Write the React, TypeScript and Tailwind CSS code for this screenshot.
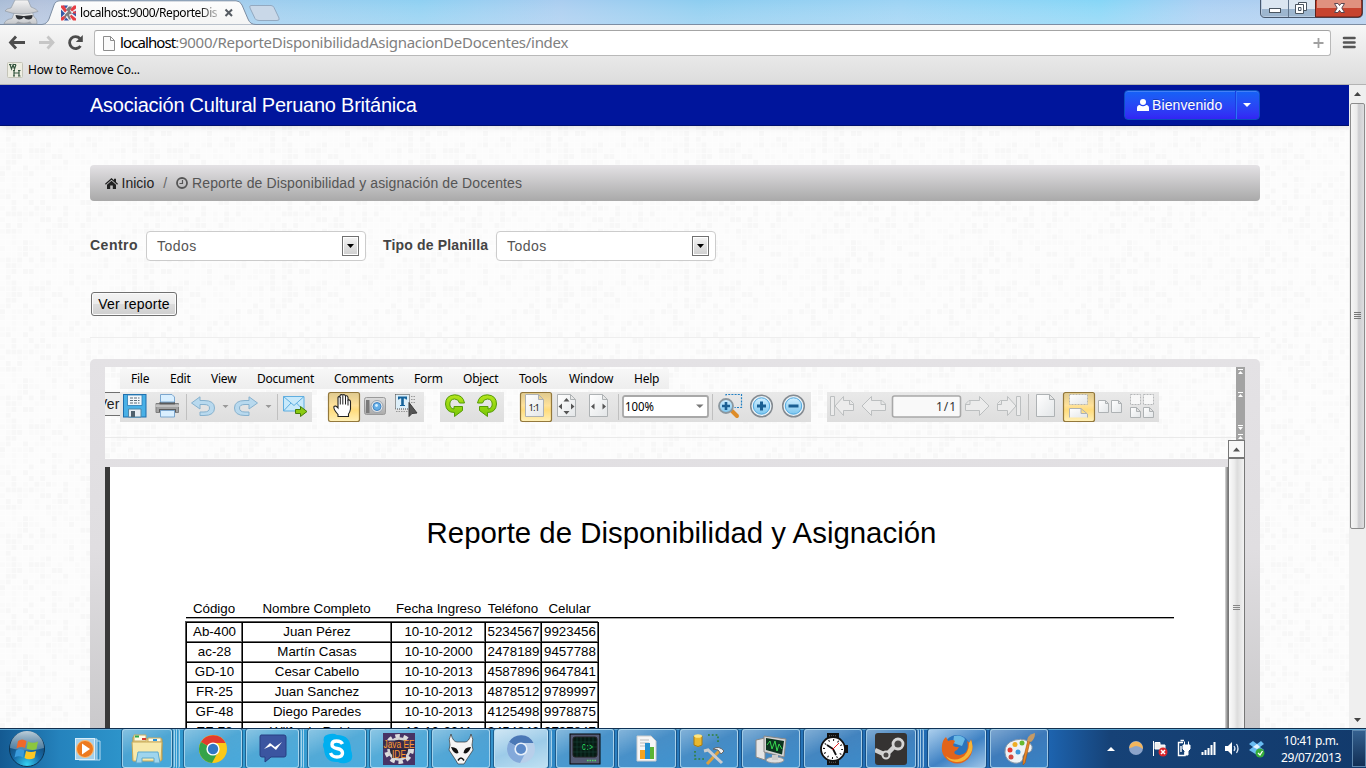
import React from "react";

const SEGOE = "font-['Noto_Sans','Open_Sans',sans-serif]";
const ARIAL = "font-['Liberation_Sans',Arial,sans-serif]";

/* ---------- background weave of the page ---------- */

function makeCells() {
  const cells: { x: number; y: number; o: number }[] = [];
  let seed = 41;
  for (let r = 0; r < 24; r++) {
    for (let c = 0; c < 24; c++) {
      seed = (seed * 1103515245 + 12345) % 2147483648;
      const v = seed / 2147483648;
      cells.push({ x: c * 5.75, y: r * 5.75, o: v > 0.82 ? 0.028 : v > 0.5 ? 0.017 : 0.008 });
    }
  }
  return cells;
}
const CELLS = makeCells();

function Weave({ id }: { id: string }) {
  return (
    <svg className="absolute inset-0 h-full w-full" aria-hidden="true">
      <defs>
        <pattern id={id} width="138" height="138" patternUnits="userSpaceOnUse">
          <rect width="138" height="138" fill="#fefefe" />
          {CELLS.map((c, i) => (
            <rect key={i} x={c.x} y={c.y} width="4.9" height="4.9" fill="#000" opacity={c.o} />
          ))}
        </pattern>
      </defs>
      <rect width="100%" height="100%" fill={`url(#${id})`} />
    </svg>
  );
}

/* ---------- browser chrome ---------- */

function TitleBar() {
  return (
    <div className="relative h-[25px] shrink-0 bg-[linear-gradient(90deg,#a9bcd6_0px,#b3c2dc_40px,#9fcdee_260px,#8fd0f2_420px,#a9cdf0_560px,#8dcdf0_700px,#9cd3f4_900px,#86d6f7_1100px,#a9cff3_1200px,#b4cdec_1366px)]">
      <svg className="absolute inset-0" width="1366" height="25">
        <defs>
          <linearGradient id="tabg" x1="0" y1="0" x2="0" y2="1">
            <stop offset="0" stopColor="#fdfdfd" />
            <stop offset="1" stopColor="#f4f4f4" />
          </linearGradient>
          <linearGradient id="hat" x1="0" y1="0" x2="0" y2="1">
            <stop offset="0" stopColor="#f4f4f4" />
            <stop offset="1" stopColor="#c4c6ca" />
          </linearGradient>
          <linearGradient id="glow" x1="0" y1="0" x2="0" y2="1">
            <stop offset="0" stopColor="#fff" stopOpacity="0" />
            <stop offset="1" stopColor="#dcebfa" stopOpacity=".3" />
          </linearGradient>
        </defs>
        <rect width="1366" height="25" fill="url(#glow)" />
        <path d="M0 24.500 H42 Q47 24 49 19 L54 5 Q55.500 .8 60 .8 H236 Q240 .8 242 5 L248 19 Q250 24.500 256 24.500 H1366 V25 H0Z" fill="url(#tabg)" stroke="#7c8da3" />
        <path d="M4 24 Q5 19.500 12 18.500 L15 11 L32 11 L34 17 Q37 18 37 24 Z" fill="url(#hat)" stroke="#8c939e" strokeWidth=".6" />
        <path d="M5 11 Q6 8.500 11 8 L15 0 H28 L31 7 Q37 9 38 11.500 Q30 14 22 14 Q12 14 5 11 Z" fill="url(#hat)" stroke="#8c939e" strokeWidth=".6" />
        <path d="M15.500 15 L23 16 L24 16 L32.500 15 Q33 19 29 19.500 Q25 19.500 24 17 Q22 19.500 19 19.500 Q16 19 15.500 15Z" fill="#2e3034" />
        <path d="M15 24 L18 21.500 Q24 24 30 21.500 L32 24Z" fill="#9ea2a8" />
        <path d="M251 5.500 H271 Q273 5.500 274 7.500 L279 18 Q280 20.500 277 20.500 H259 Q256 20.500 255 18.500 L250 8 Q249 5.500 251 5.500Z" fill="#c9d8e8" stroke="#93a9c0" />
        <g transform="translate(61,5.500)">
          <rect width="15" height="15" fill="#f5f2f4" />
          <path d="M0 4V12L4 8ZM2 0H7L5 3ZM15 5V11L11 8ZM3 15H8L5 12Z" fill="#3657a5" />
          <path d="M0 0L3 0 6 5 4 7 0 2ZM15 0V3L11 6 9 4 13 0ZM0 15V12L4 10 5 12 2 15ZM10 9L15 13V15H12L9 11ZM12 6H15V8H12Z" fill="#e63e45" />
          <path d="M5 4L8 1 11 1 9 5 11 8 8 9 10 14H8L6 10 3 14 4 9 7 6Z" fill="#7c7c80" />
        </g>
        <path d="M225.500 9.500L232 16M232 9.500L225.500 16" stroke="#555b62" strokeWidth="2" />
        <path d="M1260.500 -1V13Q1260.500 17.500 1265 17.500H1358Q1362.500 17.500 1362.500 13V-1Z" fill="#b9cbe0" stroke="#46576d" />
        <rect x="1262" y="0" width="26" height="9" fill="#dbe6f1" />
        <rect x="1262" y="9" width="53" height="7" fill="#9db6cf" />
        <rect x="1289" y="0" width="26" height="9" fill="#dbe6f1" />
        <path d="M1315.500 0H1362V13Q1362 17 1358 17H1315.500Z" fill="#c7432f" stroke="#5d221c" />
        <rect x="1317" y="0" width="44" height="8" fill="#e0917f" />
        <path d="M1288.500 0V17" stroke="#61758c" />
        <rect x="1269.500" y="8.500" width="11" height="4" fill="#fff" stroke="#4a5560" />
        <path d="M1298.500 2.500H1306.500V10.500H1298.500Z" fill="#fff" stroke="#4a5560" />
        <path d="M1295.500 4.500H1303.500V13.500H1295.500ZM1298.500 7.500H1301V10.500H1298.500Z" fill="#fff" fillRule="evenodd" stroke="#4a5560" />
        <path d="M1334.500 3.500H1338L1339.500 5.500 1341 3.500H1344.500L1341.800 8 1344.500 12.500H1341L1339.500 10.300 1338 12.500H1334.500L1337.200 8Z" fill="#fff" stroke="#5a4650" />
      </svg>
      <div className={`absolute left-[80px] top-[4px] w-[142px] overflow-hidden whitespace-nowrap text-[12px] leading-[17px] tracking-[-0.45px] text-black ${SEGOE} [mask-image:linear-gradient(90deg,#000_118px,transparent_144px)]`}>
        localhost:9000/ReporteDis
      </div>
    </div>
  );
}

function Toolbar() {
  return (
    <div className="flex h-[60px] shrink-0 flex-col border-b border-[#b3b3b3] bg-gradient-to-b from-[#f7f7f7] to-[#dcdcdc]">
      <div className="flex h-[34px] items-center">
        <svg width="94" height="34" className="shrink-0" fill="none">
          <path d="M10 17.500H25M16 11.500L10.500 17.500 16 23.500" stroke="#4c4c4c" strokeWidth="2.800" />
          <path d="M39 17.500H53M47.500 11.500L53 17.500 47.500 23.500" stroke="#c6c6c6" strokeWidth="2.800" />
          <path d="M80.500 21A6 6 0 1 1 80 13.500" stroke="#4c4c4c" strokeWidth="2.800" />
          <path d="M82.800 10V17H75.800Z" fill="#4c4c4c" />
        </svg>
        <div className="mt-[1px] flex h-[26px] w-[1237px] shrink-0 items-center rounded-[3px] border border-[#b9b9b9] border-t-[#a4a4a4] bg-white">
          <svg width="25" height="20" fill="none">
            <path d="M8.500 3.500H15.500L19.500 7.500V17.500H8.500ZM15.500 3.500V7.500H19.500" fill="#fafafa" stroke="#8d8d8d" />
          </svg>
          <span className={`-mt-px whitespace-nowrap text-[15px] leading-5 tracking-[-0.28px] text-[#808080] ${SEGOE}`}>
            <span className="tracking-[-0.9px] text-black">localhost</span>:9000/ReporteDisponibilidadAsignacionDeDocentes/index
          </span>
          <svg className="ml-auto" width="24" height="20">
            <path d="M12.500 5V15M7.500 10H17.500" stroke="#a0a0a0" strokeWidth="1.800" />
          </svg>
        </div>
        <svg width="35" height="34">
          <path d="M13 13H23.500M13 17.500H23.500M13 22H23.500" stroke="#555" strokeWidth="2.600" strokeLinecap="round" />
        </svg>
      </div>
      <div className="-mt-px flex h-[23px] items-center pl-[7px]">
        <svg width="16" height="16">
          <rect x=".5" y=".5" width="15" height="15" rx="1" fill="#eeeee2" stroke="#c4c4b8" />
          <path d="M2 2.500H4.500M6 2.500H9M3 2.500L4.500 7 6 3 7.500 7 9 2.500M7 8.500V14M12 8.500V14M7 11H12M6 8.500H8M11 8.500H13.500M6 14H8M11 14H13.500" stroke="#35563f" fill="none" strokeWidth="1.200" />
        </svg>
        <span className={`ml-[5px] whitespace-nowrap text-[12px] leading-4 tracking-[-0.23px] text-black ${SEGOE}`}>How to Remove Co...</span>
      </div>
    </div>
  );
}

/* ---------- web page ---------- */

function Navbar() {
  return (
    <div className="relative flex h-[41px] items-center justify-between border-b border-[#00106f] bg-[#00159c] pl-[90px] pr-[89px] shadow-[0_1px_6px_rgba(0,0,0,0.12)]">
      <span className="whitespace-nowrap text-[20px] leading-5 tracking-[-0.245px] text-white">Asociación Cultural Peruano Británica</span>
      <div className="flex h-[30px] w-[136px] overflow-hidden rounded-[4px] border border-[#0b4fc0] bg-gradient-to-b from-[#1462f6] to-[#3324f4] text-white shadow-[inset_0_1px_0_rgba(255,255,255,0.2)]">
        <div className="flex w-[111px] items-center border-r border-[#1a3de0] pl-[12px]">
          <svg width="12" height="12" viewBox="0 0 12 12" fill="#fff">
            <circle cx="6" cy="3" r="3" />
            <path d="M0 12V9Q0 6.300 2.700 6Q6 8.500 9.300 6Q12 6.300 12 9V12Z" />
          </svg>
          <span className="ml-[3px] whitespace-nowrap text-[14px] leading-5 tracking-[0.1px] [text-shadow:0_-1px_0_rgba(0,0,0,0.25)]">Bienvenido</span>
        </div>
        <div className="flex flex-1 items-center justify-center border-l border-[#2f72fa] pr-[2px]">
          <svg width="8" height="4"><path d="M0 0H8L4 4Z" fill="#fff" /></svg>
        </div>
      </div>
    </div>
  );
}

function Select({ label, labelClass }: { label: string; labelClass: string }) {
  return (
    <div className="flex items-center">
      <span className={`-mt-[2px] whitespace-nowrap text-[14px] font-bold leading-5 text-[#444] ${labelClass}`}>{label}</span>
      <div className="flex h-[30px] w-[220px] items-center justify-between rounded-[4px] border border-[#ccc] bg-white pl-[10px] pr-[6px] text-[14px] tracking-[0.5px] text-[#555]">
        <span>Todos</span>
        <span className="flex h-5 w-[17px] items-center justify-center border border-[#707070] bg-gradient-to-b from-[#f4f4f4] to-[#cfcfcf] shadow-[inset_0_0_0_1px_#fff]">
          <svg width="7" height="4"><path d="M0 0H7L3.500 4Z" fill="#000" /></svg>
        </span>
      </div>
    </div>
  );
}

const MENU: [string, string][] = [
  ["File", "w-[39px]"], ["Edit", "w-[41px]"], ["View", "w-[46px]"], ["Document", "w-[77px]"], ["Comments", "w-[80px]"],
  ["Form", "w-[49px]"], ["Object", "w-[56px]"], ["Tools", "w-[50px]"], ["Window", "w-[65px]"], ["Help", "w-[35px]"],
];

function ToolGroup({ width, className = "", children }: { width: number; className?: string; children: React.ReactNode }) {
  return (
    <div className={`h-[30px] shrink-0 bg-gradient-to-b from-[#e9e9e9] to-[#dedede] ${className}`}>
      <svg width={width} height="30" fill="none" className="block overflow-visible">{children}</svg>
    </div>
  );
}

const Page = ({ x, y, w, h, f = 5 }: { x: number; y: number; w: number; h: number; f?: number }) => (
  <path d={`M${x} ${y}h${w - f}l${f} ${f}v${h - f}h${-w}zM${x + w - f} ${y}v${f}h${f}`} fill="url(#paper)" stroke="#aeb2b4" />
);

const Pressed = ({ x, w = 31 }: { x: number; w?: number }) => (
  <rect x={x + 0.5} y=".5" width={w} height="29" rx="2" fill="url(#gold)" stroke="#93783c" strokeWidth="1.200" />
);

function PdfToolbar() {
  return (
    <div className="flex h-[30px]">
      <ToolGroup width={192}>
        <defs>
          <linearGradient id="paper" x1="0" y1="0" x2="1" y2="1"><stop stopColor="#fff" /><stop offset="1" stopColor="#e3e6e8" /></linearGradient>
          <linearGradient id="gold" x1="0" y1="0" x2="0" y2="1"><stop stopColor="#dec98f" /><stop offset=".45" stopColor="#ffe29a" /><stop offset=".6" stopColor="#ffdc7c" /><stop offset="1" stopColor="#fff0b8" /></linearGradient>
          <linearGradient id="blue" x1="0" y1="0" x2="0" y2="1"><stop stopColor="#d3efff" /><stop offset="1" stopColor="#7cc6ef" /></linearGradient>
          <linearGradient id="grey" x1="0" y1="0" x2="0" y2="1"><stop stopColor="#ddd" /><stop offset="1" stopColor="#aaa" /></linearGradient>
          <linearGradient id="green" x1="0" y1="0" x2="0" y2="1"><stop stopColor="#b4e51c" /><stop offset="1" stopColor="#78c805" /></linearGradient>
        </defs>
        <rect x="3.500" y="2.500" width="22.500" height="22.500" fill="#49b0e6" stroke="#1e6fae" />
        <path d="M7.500 3H22V13.500H7.500Z" fill="#f1f6fa" stroke="#2a7bb4" strokeWidth=".8" />
        <path d="M10 6H19.500M10 8.500H19.500M10 11H19.500" stroke="#5c6b78" strokeDasharray="3 1" />
        <path d="M8.500 17H21V25H8.500Z" fill="#e8edf2" stroke="#4f87a8" /><rect x="11" y="19" width="4" height="6" fill="#50616d" />
        <path d="M36 11.500H58.500V20.500H36Z" fill="#a2a2a2" stroke="#7f7f7f" />
        <path d="M39.500 10H55V14H39.500Z" fill="#5b5b5b" />
        <path d="M40.500 2.500H52L54.500 5V10H40.500Z" fill="#d9efff" stroke="#7ba6ce" />
        <path d="M35.500 12.500H59V15H35.500Z" fill="#c2c2c2" />
        <path d="M39 17H56V20H39Z" fill="#5b5b5b" />
        <path d="M40.500 18.500H54.500V25H40.500Z" fill="#d9efff" stroke="#7ba6ce" />
        <path d="M66.500 2V28M157.500 2V28" stroke="#c0c0c0" />
        <path d="M71.500 11L80 4.800V8.500H84Q94.500 8.500 94.500 16 94.500 23.500 84 23.500H80V20H84Q89.500 20 89.500 16 89.500 12.500 84 12.500H80V17Z" fill="#b8d9ee" stroke="#86b1ce" />
        <path d="M137.500 11L129 4.800V8.500H125Q114.500 8.500 114.500 16 114.500 23.500 125 23.500H129V20H125Q119.500 20 119.500 16 119.500 12.500 125 12.500H129V17Z" fill="#b8d9ee" stroke="#86b1ce" />
        <path d="M102.500 13H108.500L105.500 16ZM145.500 13H151.500L148.500 16Z" fill="#999" />
        <path d="M163.500 4.500H184V19H163.500Z" fill="#c8e9fb" stroke="#5faee0" />
        <path d="M163.500 4.500L174 13.500 184 4.500M163.500 19L171 11M184 19L176.500 11" stroke="#5faee0" />
        <path d="M175.500 17.500H180.500V14.500L187 19.500 180.500 24.500V21.500H175.500Z" fill="#8bcb12" stroke="#477c0a" />
      </ToolGroup>
      <ToolGroup width={96} className="ml-4">
        <Pressed x={0} />
        <path d="M10 24.500V22.500Q5 17 6 14.500 7.500 13 10 16V5.500Q10.500 4 12 5V3.500Q13 2 14.800 3Q16.500 1.800 17.500 4Q19.500 3 20 5.500V8Q22.500 7.500 22.500 10V17Q22 20 20.500 22V24.500Z" fill="#fff" stroke="#222" strokeWidth="1.100" />
        <path d="M12.300 5V12.500M14.800 3.500V12.500M17.500 4V12.500M20 8V13.500" stroke="#222" />
        <path d="M36.500 7.500Q36.500 5.500 38.500 5.500H55.500Q57.500 5.500 57.500 7.500V20.500Q57.500 22.500 55.500 22.500H38.500Q36.500 22.500 36.500 20.500Z" fill="url(#grey)" stroke="#9a9a9a" />
        <path d="M38 8H41.500V21H38Z" fill="#7a7a7a" /><circle cx="49" cy="14.500" r="6" fill="#e8e8e8" stroke="#9aa3ad" /><circle cx="49" cy="14.500" r="4" fill="#65aee6" stroke="#4285c4" /><circle cx="48.500" cy="13.500" r="1.400" fill="#d7efff" />
        <rect x="67.500" y="2.500" width="14" height="14.500" fill="#dceef8" stroke="#444" strokeDasharray="1 1" />
        <path d="M70 4.500H79V7.500H78L77 6.500H75.800V13H77V14H72V13H73.200V6.500H72L71 7.500H70Z" fill="#15639b" />
        <path d="M83 4.500H87M83 7.500H87M83 10.500H87M68 19.500H80" stroke="#999" strokeDasharray="1.500 1" />
        <path d="M81 10.500V24.500L84 21.500 89 21Z" fill="#555" stroke="#3d3d3d" />
      </ToolGroup>
      <ToolGroup width={64} className="ml-4">
        <path d="M24.500 11Q23 2.800 14.500 2.800 5.500 3.500 5.500 12 6 20.500 14.500 20.500V24.500L22.500 18.500 22.500 14.500H14V17Q9.800 16.500 9.800 12 10 7.200 14.500 7 18.500 7 19.500 11Z" fill="url(#green)" stroke="#559b05" />
        <path d="M37.500 11Q39 2.800 47.500 2.800 56.500 3.500 56.500 12 56 20.500 47.500 20.500V24.500L39.500 18.500 39.500 14.500H48V17Q52.200 16.500 52.200 12 52 7.200 47.500 7 43.500 7 42.500 11Z" fill="url(#green)" stroke="#559b05" />
      </ToolGroup>
      <ToolGroup width={291} className="ml-4">
        <Pressed x={0} />
        <Page x={5.5} y={2.5} w={18} h={22} />
        <Page x={37.5} y={2.5} w={18} h={22} />
        <Page x={69.5} y={2.5} w={18} h={22} />
        <path d="M46.500 6L49.500 9.500H43.500ZM46.500 22.500L49.500 19H43.500ZM38.500 14.500L42 11.500V17.500ZM54.500 14.500L51 11.500V17.500ZM71 14.500L74.500 11.500V17.500ZM86 14.500L82.500 11.500V17.500Z" fill="#555" />
        <text x="8.500" y="18.500" fontSize="9.500" fill="#222" fontFamily="Noto Sans" textLength="11.500">1:1</text>
        <path d="M98.500 2V28M192.500 2V28" stroke="#c0c0c0" />
        <rect x="103" y="4" width="85" height="21" rx="2" fill="#fff" stroke="#a8a8a8" strokeWidth="1.800" />
        <text x="105" y="19" fontSize="12" fill="#000" fontFamily="Noto Sans" textLength="29" lengthAdjust="spacingAndGlyphs">100%</text>
        <path d="M176 12.500H183.500L179.800 16Z" fill="#777" />
        <path d="M206 3.500V2.500H221.500V15.500H214.500" stroke="#2380c3" strokeWidth="1.200" strokeDasharray="2 1.200" />
        <path d="M212 19L217 24" stroke="#de8c28" strokeWidth="4" strokeLinecap="round" />
        <circle cx="206" cy="14" r="7" fill="url(#blue)" stroke="#8b979f" strokeWidth="1.800" />
        <path d="M206 10V18M202 14H210" stroke="#1a5f93" strokeWidth="2.600" />
        <circle cx="241.500" cy="14" r="10.800" fill="#e9f2f8" stroke="#848a90" strokeWidth="1.500" /><circle cx="241.500" cy="14" r="8.200" fill="url(#blue)" stroke="#4fa8df" />
        <path d="M241.500 9.500V18.500M237 14H246" stroke="#1a5f93" strokeWidth="3" />
        <circle cx="273.500" cy="14" r="10.800" fill="#e9f2f8" stroke="#848a90" strokeWidth="1.500" /><circle cx="273.500" cy="14" r="8.200" fill="url(#blue)" stroke="#4fa8df" />
        <path d="M268.500 14H278.500" stroke="#1a5f93" strokeWidth="3" />
      </ToolGroup>
      <ToolGroup width={332} className="ml-4">
        <g stroke="#bcbfc0" fill="#ececec" strokeLinejoin="round">
          <path d="M3.500 4.500H7.500V23.500H3.500ZM8 14L16.500 4.500V8.500H23.500L26.500 11.500V18.500H16.500V23.500ZM22.500 9V12.500H26" />
          <path d="M35 14L44.500 4.500V8.500H55L58.500 12V18.500H44.500V23.500ZM54 9V12.500H58" />
          <path d="M162 14L152.500 4.500V8.500H142L138.500 12V18.500H152.500V23.500ZM143 9V12.500H139" />
          <path d="M193.500 4.500H189.500V23.500H193.500ZM189 14L180.500 4.500V8.500H173.500L170.500 11.500V18.500H180.500V23.500ZM174.500 9V12.500H171" />
        </g>
        <rect x="65.500" y="4" width="68" height="21" rx="2" fill="#f9f9f9" stroke="#a8a8a8" strokeWidth="1.600" />
        <text x="109" y="18.500" fontSize="12" fill="#333" fontFamily="Noto Sans" textLength="20">1/1</text>
        <path d="M201.500 2V28" stroke="#c0c0c0" />
        <Page x={209.5} y={2.5} w={18} h={22} />
        <Pressed x={236} w={31} />
        <rect x="242.500" y="2.500" width="18" height="10" fill="url(#paper)" stroke="#b6b6b0" strokeDasharray="2 1" />
        <path d="M242.500 25.500V16.500H254L260.500 22V25.500M254 16.500V21.500H260" fill="url(#paper)" stroke="#aeb2b4" />
        <Page x={271.5} y={8.5} w={10} h={12} f={3} /><Page x={284.5} y={8.5} w={10} h={12} f={3} />
        <g strokeDasharray="2 1"><rect x="303.500" y="2.500" width="10" height="10" fill="#f7f7f7" stroke="#b5b7b8" /><rect x="316.500" y="2.500" width="10" height="10" fill="#f7f7f7" stroke="#b5b7b8" /></g>
        <Page x={303.5} y={15.5} w={10} h={10} f={4} /><Page x={316.5} y={15.5} w={10} h={10} f={4} />
      </ToolGroup>
    </div>
  );
}

const ROWS = [
  ["Ab-400", "Juan Pérez", "10-10-2012", "5234567", "9923456"],
  ["ac-28", "Martín Casas", "10-10-2000", "2478189", "9457788"],
  ["GD-10", "Cesar Cabello", "10-10-2013", "4587896", "9647841"],
  ["FR-25", "Juan Sanchez", "10-10-2013", "4878512", "9789997"],
  ["GF-48", "Diego Paredes", "10-10-2013", "4125498", "9978875"],
  ["EF-78", "Wilfredo Robles", "10-10-2011", "9454843", "9797847"],
];
const COLS = "grid-cols-[56px_149px_94px_56px_57px]";

function Report() {
  return (
    <div className="relative flex flex-1 border-l-[5px] border-[#3a3a3a] bg-white">
      <div className="w-full text-[13.33px] text-black">
        <h1 className="mt-[48px] pl-[25px] text-center text-[29.4px] leading-[36px]"><span className="whitespace-nowrap">Reporte de Disponibilidad y Asignación</span></h1>
        <div className="ml-[76px] mt-[49px] w-[988px] border-b border-black shadow-[0_1px_0_#aaa]">
          <div className={`grid h-[17px] ${COLS} items-center whitespace-nowrap text-center leading-[17px]`}>
            <span>Código</span><span>Nombre Completo</span><span className="pl-px">Fecha Ingreso</span><span>Teléfono</span><span>Celular</span>
          </div>
        </div>
        <div className="ml-[76px] mt-[4px] w-[413px] border-l border-t border-black shadow-[-1px_-1px_0_#555]">
          {ROWS.map((r, i) => (
            <div key={i} className={`grid h-5 ${COLS}`}>
              {r.map((v, j) => (
                <span key={j} className="flex items-center justify-center whitespace-nowrap border-b border-r border-black pb-px leading-[18px] shadow-[inset_-1px_-1px_0_#666]">{v}</span>
              ))}
            </div>
          ))}
        </div>
      </div>
    </div>
  );
}

function Viewer() {
  return (
    <div className="relative ml-[90px] mt-[21px] flex h-[380px] w-[1170px] rounded-t-[5px] bg-gradient-to-b from-[#e4e2e5] via-[#e0dee1] to-[#c9c8ca] px-[15px] pt-2">
      <div className="relative flex w-[1140px] flex-col">
        <div className="relative flex h-[92px] shrink-0 overflow-hidden bg-white">
          <Weave id="weave2" />
          <div className="relative flex w-[15px] flex-col">
            <div className="mt-[25px] h-[24px] overflow-hidden border-y border-[#707070] bg-[#eee]">
              <div className="-ml-[7px] whitespace-nowrap text-[14px] leading-[22px] tracking-[0.2px] text-[#222]">Ver</div>
            </div>
          </div>
          <div className="relative flex-1">
            <div className={`mt-[2px] flex h-5 w-[549px] items-center bg-gradient-to-b from-[#f7f7f7] to-[#eee] pl-[11px] text-[12px] tracking-[-0.23px] text-black ${SEGOE}`}>
              {MENU.map(([m, w]) => <span key={m} className={`shrink-0 whitespace-nowrap ${w}`}>{m}</span>)}
            </div>
            <div className="mt-[3px]"><PdfToolbar /></div>
            <div className="-ml-[15px] mt-[15px] h-px w-[1131px] bg-[#eaeaea]" />
          </div>
          <svg className="relative" width="9" height="92">
            <rect width="9" height="92" fill="#a3a3a3" />
            <path d="M2 2.500H7M2 25.500H7M2 58.500H7M2 67.500H7" stroke="#fff" />
            <path d="M2 7L4.500 4 7 7ZM2 30L4.500 27 7 30ZM2 60L4.500 63 7 60ZM2 72L4.500 69 7 72Z" fill="#fff" />
          </svg>
        </div>
        <div className="h-[8px] shrink-0" />
        <div className="flex flex-1 pr-[17px]">
          <Report />
          <div className="relative -ml-[3px] w-[3px] bg-gradient-to-r from-[#ddd] to-[#777]" />
        </div>
        <div className="absolute right-0 top-[73px] flex h-[307px] w-[17px] flex-col">
          <div className="flex h-[18px] items-center justify-center border border-[#777] bg-[#f8f8f8]">
            <svg width="7" height="5"><path d="M0 4.500L3.500 .5 7 4.500Z" fill="#555" /></svg>
          </div>
          <div className="flex flex-1 justify-center border border-[#777] bg-[linear-gradient(90deg,#fafafa,#ededed_35%,#dcdcdc_55%,#f3f3f3)] pt-[146px] pr-[1px]">
            <svg width="7" height="6"><path d="M0 .5H7M0 2.500H7M0 4.500H7" stroke="#888" /></svg>
          </div>
        </div>
      </div>
    </div>
  );
}

function PageScrollbar() {
  return (
    <div className="flex w-[17px] shrink-0 flex-col bg-[#efefef]">
      <div className="flex h-[18px] items-center justify-center"><svg width="7" height="4"><path d="M0 4L3.500 0 7 4Z" fill="#444" /></svg></div>
      <div className="ml-[1px] flex h-[426px] w-[15px] items-center justify-center rounded-[2px] border border-[#8c8c8c] bg-[linear-gradient(90deg,#f5f5f5,#eaeaea_45%,#cccccf_60%,#dedee0)]">
        <svg width="7" height="8"><path d="M0 .5H7M0 2.500H7M0 4.500H7M0 6.500H7" stroke="#777" /></svg>
      </div>
      <div className="mt-auto flex h-[17px] items-center justify-center"><svg width="7" height="4"><path d="M0 0H7L3.500 4Z" fill="#444" /></svg></div>
    </div>
  );
}

/* ---------- taskbar ---------- */

const ICONS: Record<string, React.ReactNode> = {
  folder: <><path d="M2 4H13L15 6H31V27H2Z" fill="#f1d98c" stroke="#b89645" /><path d="M3 2H15V8H3ZM17 5H30V9H17Z" fill="#fffbe6" stroke="#c8ad65" /><path d="M4 2.500H8V4.500H4Z" fill="#2da84a" /><path d="M11 5H15V7H11Z" fill="#d63b30" /><path d="M22 6H26V8H22Z" fill="#2794e0" /><path d="M1 9H31L30 28H2Z" fill="#f8e9ab" stroke="#c7a95b" /><path d="M5 30L7 19H27L29 30H23V25H11V30Z" fill="#9ed5ee" stroke="#5fa9cc" /></>,
  chrome: <><circle cx="16" cy="16" r="14" fill="#fbc917" /><path d="M16 16L4 9A14 14 0 0 1 28.500 10H16Z" fill="#e23b2e" /><path d="M3.900 9A14 14 0 0 0 15 30L21 19 16 16Z" fill="#35a34a" /><circle cx="16" cy="16" r="6.600" fill="#fff" /><circle cx="16" cy="16" r="5.200" fill="#3277c4" /></>,
  messenger: <><path d="M4 2H27Q29 2 29 4V22Q29 24 27 24H14L8 29V24H5Q3 24 3 22V4Q3 2 4 2Z" fill="#3b55a0" stroke="#263e82" /><path d="M7 16L13 10 18 14 25 9 19 17 14 13Z" fill="#fff" /></>,
  skype: <><path d="M3 9Q1 2 9 1Q13 0 16 2Q30 2 30 17Q34 28 25 30Q20 31 17 29Q4 30 3 16Q1 12 3 9Z" fill="#00aff0" /><path d="M21.500 11Q20 8 15.500 8 11 8 11 11.500 11 14.500 16 15.500 21.500 16.500 21.500 20 21.500 24 16 24 11 24 9.500 20" fill="none" stroke="#fff" strokeWidth="3.400" /></>,
  java: <><rect width="32" height="32" fill="#473465" /><circle cx="16" cy="16" r="13" fill="none" stroke="#ddd" strokeWidth="4" strokeDasharray="4.500 3.670" /><circle cx="16" cy="16" r="10.500" fill="#2a2438" stroke="#d4d4d4" strokeWidth="2.500" /><path d="M0 7.500H32V16H0ZM9 17H23V25H9Z" fill="#372a4a" opacity=".9" /><text x="0.500" y="15" fontSize="10" fill="#ff9a30" fontFamily="Liberation Sans" textLength="31" lengthAdjust="spacingAndGlyphs">Java EE</text><text x="9" y="24.500" fontSize="10" fill="#ff9a30" fontFamily="Liberation Sans" textLength="14" lengthAdjust="spacingAndGlyphs">IDE</text></>,
  foobar: <><path d="M6 1Q8 9 12 9H20Q24 9 26 1 29 6 27 12L28 17 22 26 19 31H13L10 26 4 17 5 12Q3 6 6 1Z" fill="#f5f5f5" stroke="#333" strokeWidth=".7" /><path d="M6 14Q13 14 13.500 20 9 22 6 14ZM26 14Q19 14 18.500 20 23 22 26 14Z" fill="#111" /><path d="M13 27.500Q16 22.500 19 27.500" fill="none" stroke="#111" strokeWidth="1.500" /></>,
  chromium: <><circle cx="16" cy="16" r="14" fill="#b8cfea" /><path d="M16 16L4 9A14 14 0 0 1 28.500 10H16Z" fill="#4a78b6" /><path d="M3.900 9A14 14 0 0 0 15 30L21 19 16 16Z" fill="#83a9da" /><circle cx="16" cy="16" r="6.600" fill="#e7f0fa" /><circle cx="16" cy="16" r="5" fill="#5b89c8" /></>,
  cmd: <><rect x="1" y="1" width="30" height="30" fill="#555b75" stroke="#000" /><rect x="4" y="4" width="24" height="20" rx="2" fill="#071b14" stroke="#222" /><path d="M8 4V24M12 4V24M16 4V24M20 4V24M24 4V24M4 9H28M4 14H28M4 19H28" stroke="#174437" strokeWidth=".6" /><text x="13" y="17" fontSize="9" fill="#2ee869" fontFamily="Liberation Mono" textLength="11" lengthAdjust="spacingAndGlyphs">C:&gt;</text><path d="M18 27.500H27" stroke="#55d865" strokeWidth="1.500" strokeDasharray="1.500 1" /></>,
  chart: <><path d="M6 3H20L25 8V28H6Z" fill="#f6f6f6" stroke="#ccc" /><path d="M9 7H18M9 10H18M9 13H14" stroke="#bbb" /><rect x="9" y="17" width="5" height="9" fill="#f2a322" /><rect x="14" y="10" width="5" height="16" fill="#248fd0" /><rect x="19" y="14" width="4" height="12" fill="#5bb434" /></>,
  tools: <><path d="M1 3V12Q5 15 9 12V3Z" fill="#eab82e" stroke="#a77a12" /><ellipse cx="5" cy="3" rx="4" ry="1.800" fill="#ffe681" /><path d="M15 2H25V11M2 18V26H12" fill="none" stroke="#318034" strokeWidth="1.600" strokeDasharray="1.800 2" /><path d="M14 31L27 17" stroke="#dca03d" strokeWidth="3" /><path d="M11 18L15 17 29 30" fill="none" stroke="#ccc" strokeWidth="3" /><path d="M20 16Q26 12 31 18L28 21 25 17Z" fill="#eee" stroke="#666" /></>,
  monitor: <><path d="M1 7L10 5V27L1 24Z" fill="#e5e5e5" stroke="#888" /><path d="M9 3L31 6 29 24 9 19Z" fill="#d4d4d4" stroke="#888" /><path d="M11 5L29 8 27 21.500 11 17Z" fill="#0c3420" /><path d="M12 12L15 8 17 16 20 8 22 18 24 11 27 16" fill="none" stroke="#37d74f" /><ellipse cx="20" cy="27" rx="9" ry="3" fill="#ddd" stroke="#999" /><path d="M17 22H23V27H17Z" fill="#ccc" /></>,
  watch: <><path d="M10 0H22V6H10ZM10 26H22V32H10Z" fill="#111" /><path d="M12 3H20M12 29H20" stroke="#888" strokeDasharray="1 1" /><circle cx="16" cy="16" r="12" fill="#fff" stroke="#111" strokeWidth="1.800" /><circle cx="16" cy="16" r="9" fill="none" stroke="#111" strokeWidth="2" strokeDasharray="1 3.700" /><path d="M16 16L10 12M16 16L19 22" stroke="#111" strokeWidth="1.800" /><path d="M15 17L22 10" stroke="#e22" /><path d="M28 12H31V20H28Z" fill="#111" /></>,
  steam: <><rect width="32" height="32" rx="3" fill="#353332" /><path d="M0 17L11 22 22 11" fill="none" stroke="#d0d0d0" strokeWidth="4.500" /><circle cx="23" cy="11" r="5" fill="#4a4847" stroke="#d5d5d5" strokeWidth="2.800" /><circle cx="11" cy="22" r="3.500" fill="#4a4847" stroke="#d5d5d5" strokeWidth="2" /></>,
  firefox: <><circle cx="16" cy="15" r="13" fill="#2a73bd" /><path d="M13 3Q20 1 24 6L21 13 12 10Z" fill="#69b8e4" /><path d="M1 18Q0 8 5 4L7 8Q12 6 14 8L12 12Q13 14.500 18 14L16 17Q12 18 14 21 20 24 25 19 28 15 26 8L29 10 30 6Q34 18 27 26 18 34 8 28 2 24 1 18Z" fill="#e2641a" /><path d="M30 7Q33 14 30 20 24 30 15 29 7 28 5 23 12 29 20 25 28 21 28 10Z" fill="#f8b436" /></>,
  paint: <><path d="M2 20Q1 10 12 7 24 4 29 13 30 19 24 20 19 21 20 26 18 31 11 30 3 28 2 20Z" fill="#eef2f5" stroke="#8798a8" /><circle cx="7" cy="17" r="2.500" fill="#e33c32" /><circle cx="12" cy="11.500" r="2.500" fill="#efae25" /><circle cx="19" cy="10" r="2.500" fill="#66b930" /><circle cx="8" cy="24" r="2.500" fill="#d2483f" /><circle cx="15" cy="19" r="2.500" fill="#3d97da" /><path d="M27 8L22 30 20 32 20 27 25 7Z" fill="#e68626" stroke="#a3510d" strokeWidth=".6" /><path d="M24 8Q24 2 32 0 32 6 28 9Z" fill="#c59a66" /></>,
};

const TASKS: { icon: string; w: string; stack: number }[] = [
  { icon: "folder", w: "w-[50px]", stack: 3 }, { icon: "chrome", w: "w-[58px]", stack: 0 },
  { icon: "messenger", w: "w-[53px]", stack: 2 }, { icon: "skype", w: "w-[58px]", stack: 0 },
  { icon: "java", w: "w-[58px]", stack: 0 }, { icon: "foobar", w: "w-[58px]", stack: 0 },
  { icon: "chromium", w: "w-[54px]", stack: 1 }, { icon: "cmd", w: "w-[58px]", stack: 0 },
  { icon: "chart", w: "w-[58px]", stack: 0 }, { icon: "tools", w: "w-[58px]", stack: 0 },
  { icon: "monitor", w: "w-[58px]", stack: 0 }, { icon: "watch", w: "w-[58px]", stack: 0 },
  { icon: "steam", w: "w-[50px]", stack: 3 }, { icon: "firefox", w: "w-[58px]", stack: 0 },
  { icon: "paint", w: "w-[58px]", stack: 0 },
];

function Taskbar() {
  return (
    <div className="flex h-10 shrink-0 border-t border-[#13304f] bg-[linear-gradient(90deg,#145a92_0px,#2583bd_60px,#2e96cc_130px,#3a9fd3_400px,#2b7fc0_620px,#2470b5_850px,#1d63ae_1050px,#164277_1110px,#123a6c_1366px)] shadow-[inset_0_1px_0_#5fa8d3]">
      <svg width="122" height="39" className="shrink-0">
        <defs>
          <radialGradient id="orb" cx=".5" cy=".95" r=".9"><stop stopColor="#35d2f3" /><stop offset=".45" stopColor="#176aa8" /><stop offset="1" stopColor="#123a5e" /></radialGradient>
          <linearGradient id="orbt" x1="0" y1="0" x2="0" y2="1"><stop stopColor="#dceaf2" stopOpacity=".85" /><stop offset="1" stopColor="#7fa3bb" stopOpacity=".5" /></linearGradient>
        </defs>
        <circle cx="27" cy="20" r="17.500" fill="url(#orb)" stroke="#0c3454" />
        <path d="M10 19A17 17 0 0 1 44 19Q27 24 10 19Z" fill="url(#orbt)" />
        <path d="M18 12Q22 9 26.500 12L25 19Q21 17 16.500 19.500Z" fill="#f0682a" />
        <path d="M28 12.500Q33 15 38 12.500L36.500 20Q32 22 26.500 19.500Z" fill="#8cc63e" />
        <path d="M16 21.500Q20 18.500 24.500 21.500L23 28.500Q19 26 14.500 28.500Z" fill="#3a9bdc" />
        <path d="M26 22Q31 24 36 22L34.500 29Q29 31.500 24.500 29Z" fill="#fcc723" />
        <path d="M79 10H97V31H79Z" fill="#8dc5e8" stroke="#d7ecf8" opacity=".8" /><path d="M97 12H100V31H97" fill="none" stroke="#b8dcf1" />
        <rect x="75.500" y="9.500" width="19" height="21" fill="#a5d0ea" stroke="#d8edf8" />
        <circle cx="85" cy="20" r="8.500" fill="#ed7a1f" stroke="#fcbf78" /><path d="M82 14.500L90 20 82 25.500Z" fill="#fff" />
      </svg>
      <div className="flex gap-1">
        {TASKS.map((t) => {
          const active = t.icon === "chromium";
          const bright = t.icon === "firefox";
          return (
            <div key={t.icon} className="flex h-[39px] w-[58px]">
              <div className={`flex items-center justify-center rounded-[3px] border border-[#c4e4f4]/70 shadow-[0_0_0_1px_rgba(12,52,92,0.55)] ${t.w} ${active ? "bg-[linear-gradient(160deg,#cfe6f4,#9ccbe8_50%,#bfe0f2)]" : bright ? "bg-[linear-gradient(150deg,#a9cdec,#3f82c4_55%,#9cc4e8)]" : "bg-[linear-gradient(155deg,rgba(255,255,255,0.42),rgba(255,255,255,0.14)_45%,rgba(120,205,250,0.3))]"}`}>
                <svg width="32" height="32" className="shrink-0">{ICONS[t.icon]}</svg>
              </div>
              {Array.from({ length: t.stack }, (_, i) => (
                <div key={i} className="ml-px flex-1 rounded-r-[3px] border-r border-[#c4e4f4]/70 bg-white/20" />
              ))}
            </div>
          );
        })}
      </div>
      <svg width="164" height="39" className="ml-[56px] shrink-0">
        <path d="M3 22L7 18 11 22Z" fill="#fff" />
        <g transform="translate(-1104,-1)">
          <circle cx="1136" cy="20" r="7" fill="#8ca4ca" /><path d="M1129 20A7 7 0 0 1 1143 21Q1137 16 1133 19 1131 20 1129 20Z" fill="#f4b65c" />
          <path d="M1153.500 13V28M1155 14.500H1160V17H1165V23H1160V21H1155Z" stroke="#fff" fill="#eee" /><circle cx="1163" cy="24" r="4.500" fill="#d8262c" /><path d="M1161 22L1165 26M1165 22L1161 26" stroke="#fff" strokeWidth="1.500" />
          <path d="M1183 14.500H1178.500V27.500H1185V24M1180.500 12.500H1184M1181 18V24" fill="none" stroke="#fff" strokeWidth="1.400" /><path d="M1183 17H1190V21L1188 23V27H1185V23L1183 21ZM1184.500 13.500V17M1188.500 13.500V17" fill="#fff" stroke="#fff" />
          <path d="M1202.500 24V27M1205.500 22V27M1208.500 20V27M1211.500 17V27M1214.500 14V27" stroke="#fff" strokeWidth="2" />
          <path d="M1225 18H1228L1232 14V27L1228 23H1225Z" fill="#fff" /><path d="M1234 18Q1236 20.500 1234 23M1236.500 16Q1239.500 20.500 1236.500 25" fill="none" stroke="#dfe8f4" strokeWidth="1.200" />
          <path d="M1249 16L1253 13 1257 16 1261 13 1264 16 1260 19 1264 22 1257 27 1249 22 1253 19Z" fill="#69bcf2" /><path d="M1253 19L1257 16 1260 19 1257 21Z" fill="#e3f3ff" /><circle cx="1260" cy="25" r="4.500" fill="#36ac3a" /><path d="M1258 25L1260 27 1262.500 23" fill="none" stroke="#fff" strokeWidth="1.300" />
        </g>
      </svg>
      <div className={`ml-auto flex w-[82px] shrink-0 flex-col items-center justify-center whitespace-nowrap text-[12px] leading-[17px] tracking-[-0.4px] text-white ${SEGOE}`}>
        <span>10:41 p.m.</span><span>29/07/2013</span>
      </div>
      <div className="my-px w-[14px] shrink-0 border border-[#5d86ad] bg-gradient-to-b from-[#34608f] to-[#122f55]" />
    </div>
  );
}

export default function App() {
  return (
    <div className={`flex h-[768px] w-[1366px] flex-col overflow-hidden bg-white ${ARIAL}`}>
      <TitleBar />
      <Toolbar />
      <div className="flex h-[643px] shrink-0 overflow-hidden">
        <div className="relative h-[643px] w-[1349px] overflow-hidden">
          <Weave id="weave1" />
          <Navbar />
          <div className="relative">
            <div className="ml-[90px] mt-[39px] flex h-9 w-[1170px] items-center rounded-[4px] bg-gradient-to-b from-[#e4e2e5] to-[#a9a9a9] pl-[15px] text-[14px] leading-5 text-[#555]">
              <svg width="13" height="11" viewBox="0 0 13 11" fill="#222"><path d="M6.500 0L9 2.200V.7H11V4L13 5.800 12.200 6.700 6.500 1.800 .8 6.700 0 5.800ZM6.500 2.800L11 6.700V11H7.800V7.500H5.200V11H2V6.700Z" /></svg>
              <span className="ml-[3.5px] text-[#222]">Inicio</span>
              <span className="ml-[9px] text-[#666]">/</span>
              <svg className="ml-[8.5px]" width="12" height="12" fill="none" stroke="#555"><circle cx="6" cy="6" r="5" strokeWidth="1.800" /><path d="M6.500 3V6.500H3.500" strokeWidth="1.200" /></svg>
              <span className="ml-[4.5px] whitespace-nowrap tracking-[0.11px]">Reporte de Disponibilidad y asignación de Docentes</span>
            </div>
            <div className="ml-[90px] mt-[30px] flex gap-[17px]">
              <Select label="Centro" labelClass="w-[56px] tracking-[0.5px]" />
              <Select label="Tipo de Planilla" labelClass="w-[113px] tracking-[0.17px]" />
            </div>
            <button className="ml-[91px] mt-[31px] flex h-6 w-[86px] items-center justify-center whitespace-nowrap rounded-[3px] border border-[#707070] bg-[linear-gradient(180deg,#f3f3f3,#ebebeb_50%,#dcdcdc_50%,#cfcfcf)] text-[14px] leading-5 tracking-[0.2px] text-black shadow-[inset_0_0_0_1px_#fbfbfb]">Ver reporte</button>
            <div className="ml-[90px] mt-[21px] h-px w-[1170px] bg-[#eee]" />
            <Viewer />
          </div>
        </div>
        <PageScrollbar />
      </div>
      <Taskbar />
    </div>
  );
}
